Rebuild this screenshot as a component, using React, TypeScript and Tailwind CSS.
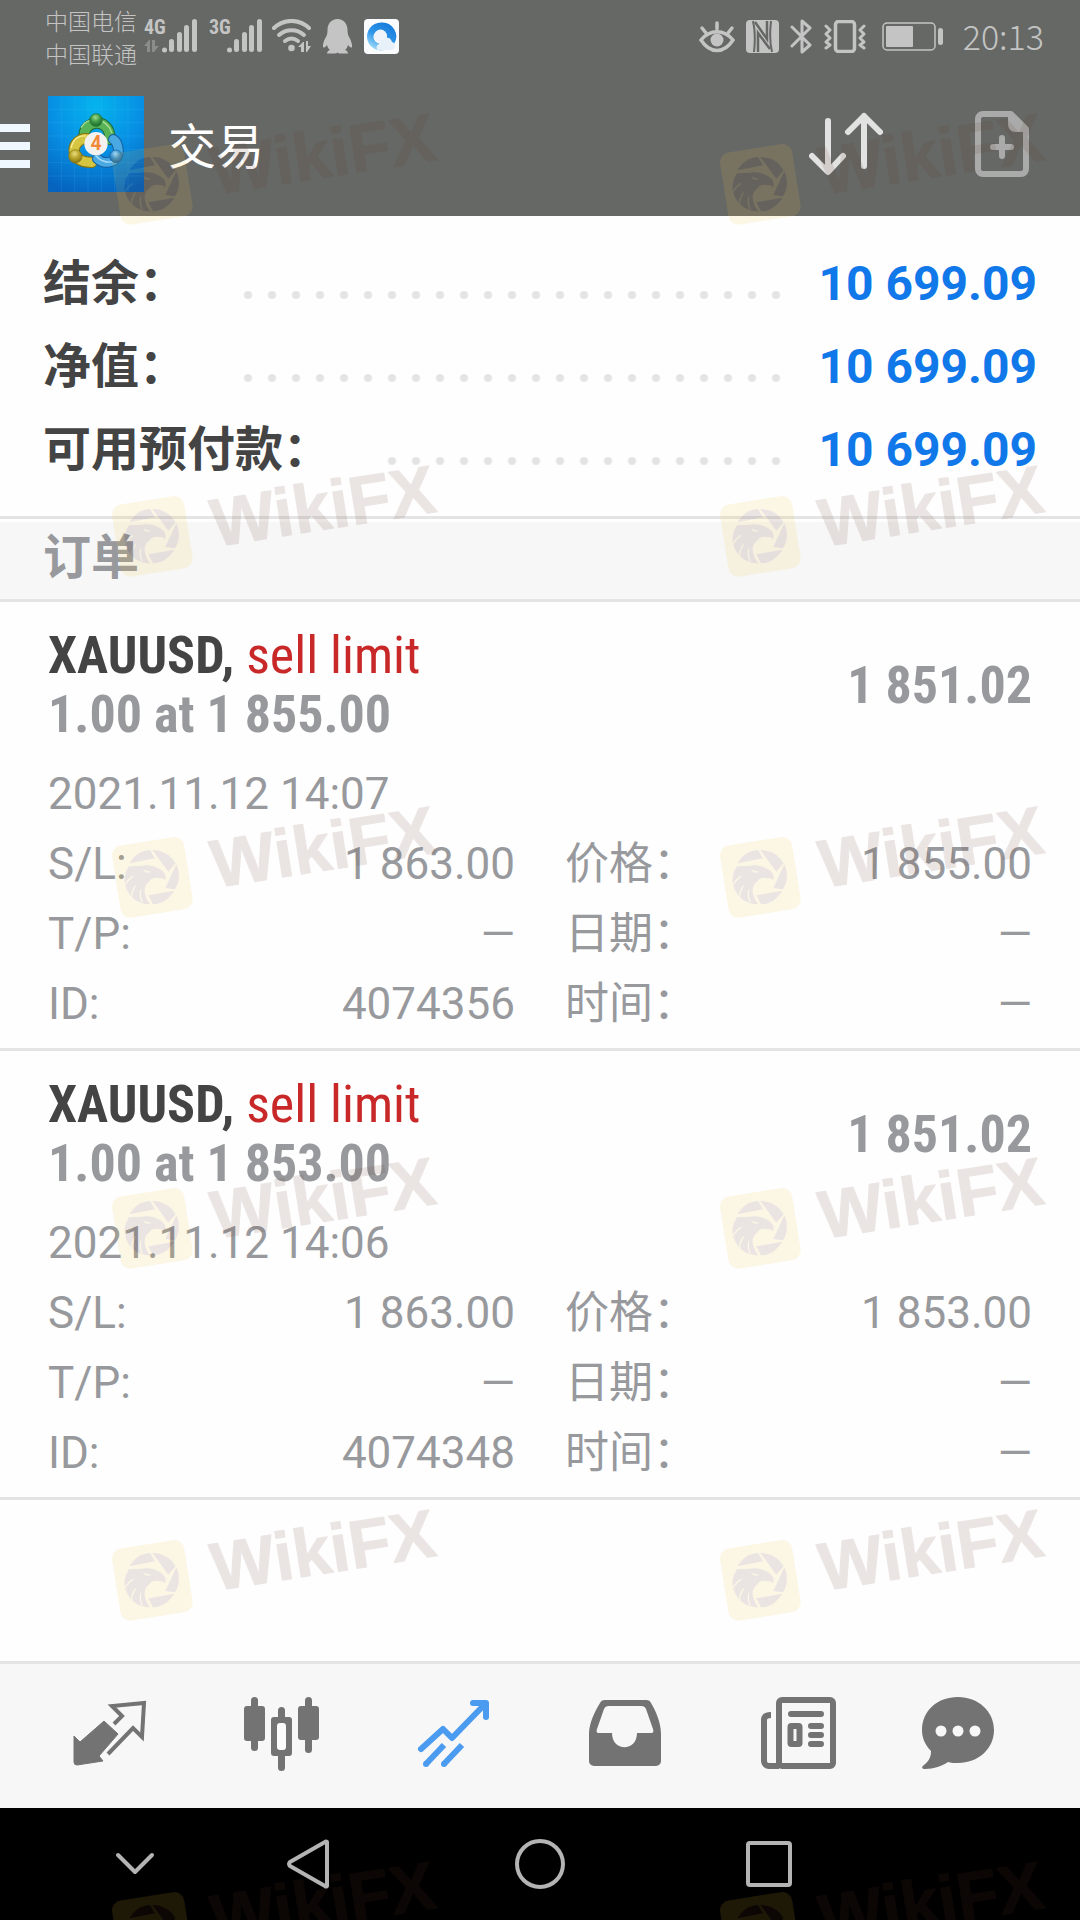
import React from "react";

const cjk = "font-['Roboto','Noto_Sans_CJK_SC',sans-serif]";
const condensed = "font-['Roboto_Condensed','Roboto','Noto_Sans_CJK_SC',sans-serif]";

/* ---------- status bar ---------- */

function Signal({ label, data }: { label: string; data?: boolean }) {
  return (
    <svg className="h-[35px] w-[53px] shrink-0 overflow-visible" viewBox="0 0 53 35" fill="#c3c4c3">
      <text x="0" y="15" fontSize="20" fontWeight="700" fontFamily="Roboto Condensed, Liberation Sans Narrow, Roboto, sans-serif">
        {label}
      </text>
      {data && (
        <g fill="#8b8c8b">
          <path d="M0 27l5-6h1v12H3v-6z" />
          <path d="M8 21h3v6h4l-5 6H8z" />
        </g>
      )}
      <circle cx="20.500" cy="31" r="2.500" />
      <rect x="25" y="20" width="5" height="13" rx="2.500" />
      <rect x="33" y="13" width="5" height="20" rx="2.500" />
      <rect x="40" y="6" width="5" height="27" rx="2.500" />
      <rect x="48" y="0" width="5" height="33" rx="2.500" />
    </svg>
  );
}

function WifiIcon() {
  return (
    <svg className="h-[35px] w-[39px] shrink-0" viewBox="0 0 39 35" fill="none" stroke="#c3c4c3" strokeWidth="4" strokeLinecap="round">
      <path d="M2 9C12-.5 27-.5 37 9" />
      <path d="M7 16c7-6.500 18-6.500 25 0" />
      <path d="M13 22c4-3 9-3 13 0" />
      <circle cx="19.500" cy="29" r="3.300" fill="#c3c4c3" stroke="none" />
      <g fill="#c3c4c3" stroke="none">
        <path d="M26 28l5-5h1v10h-3v-5z" />
        <path d="M34 22h2v5h3l-4 6h-1z" />
      </g>
    </svg>
  );
}

function PenguinIcon() {
  return (
    <svg className="h-[35px] w-[29px] shrink-0" viewBox="0 0 29 35" fill="#c3c4c3">
      <path d="M14.500 0C8 0 4.500 5 4.500 11c0 3-.5 5-1.500 7-2 3-3.500 8-3 10 1 1.500 3-.5 4-2 .5 2 1.500 4 3 5-2 .5-3 2-3 3.500h8c1 0 2-.5 2.500-1 .5.500 1.500 1 2.500 1h8c0-1.500-1-3-3-3.500 1.500-1 2.500-3 3-5 1 1.500 3 3.500 4 2 .5-2-1-7-3-10-1-2-1.500-4-1.500-7 0-6-3.500-11-10-11z" />
    </svg>
  );
}

function BrowserIcon() {
  return (
    <svg className="h-[35px] w-[35px] shrink-0" viewBox="0 0 35 35">
      <defs>
        <linearGradient id="ring" x1="0.800" y1="0" x2="0.200" y2="1">
          <stop offset="0" stopColor="#1478d8" />
          <stop offset="0.550" stopColor="#2f97ea" />
          <stop offset="1" stopColor="#aee3fb" />
        </linearGradient>
      </defs>
      <rect width="35" height="35" rx="4" fill="#fbfcfd" />
      <path d="M17 3.500a14 14 0 1 0 8 25.500l5-4a14 14 0 0 0-13-21.500zm-1 8a6.500 6.500 0 1 1 0 13 6.500 6.500 0 0 1 0-13z" fill="url(#ring)" />
      <circle cx="16.500" cy="17" r="6.500" fill="#eef4fa" />
      <path d="M14 31c-2-1-2-5 1-6 1-4 4-6 7-6 3-1 5 1 6 4 4 1 4 7 0 8z" fill="#e8f1fa" />
    </svg>
  );
}

function EyeIcon() {
  return (
    <svg className="h-[33px] w-[36px] shrink-0" viewBox="0 0 36 33" fill="none" stroke="#c3c4c3" strokeWidth="3.500" strokeLinecap="round">
      <path d="M2 20c9-11 23-11 32 0-9 14-23 14-32 0z" />
      <path d="M18 3v6M3 8l4 5M33 8l-4 5" />
      <circle cx="18" cy="20" r="6.500" fill="#c3c4c3" stroke="none" />
    </svg>
  );
}

function NfcIcon() {
  return (
    <svg className="h-[33px] w-[33px] shrink-0" viewBox="0 0 33 33">
      <rect width="33" height="33" rx="4" fill="#c3c4c3" />
      <path d="M7 1c2 8 2 22 1 31M26 32c-2-8-2-22-1-31" fill="none" stroke="#666866" strokeWidth="2" />
      <path d="M12 32V13l12 16M21 1v18L9 2" fill="none" stroke="#666866" strokeWidth="2.500" />
    </svg>
  );
}

function BluetoothIcon() {
  return (
    <svg className="h-[35px] w-[23px] shrink-0" viewBox="0 0 23 35" fill="none" stroke="#c3c4c3" strokeWidth="3" strokeLinecap="round" strokeLinejoin="round">
      <path d="M2 8l18 18-8 7V2l8 7L2 27" />
    </svg>
  );
}

function VibrateIcon() {
  return (
    <svg className="h-[33px] w-[42px] shrink-0" viewBox="0 0 42 33" fill="none" stroke="#c3c4c3" strokeWidth="3" strokeLinejoin="round" strokeLinecap="round">
      <rect x="11.500" y="1.500" width="19" height="30" rx="3" strokeWidth="3.500" />
      <path d="M2 6l4 4-4 4 4 4-4 4 4 3-4 3M40 6l-4 4 4 4-4 4 4 4-4 3 4 3" />
    </svg>
  );
}

function BatteryIcon() {
  return (
    <svg className="h-[29px] w-[61px] shrink-0" viewBox="0 0 61 29" fill="none">
      <rect x="1" y="1" width="52" height="27" rx="4" stroke="#c3c4c3" strokeWidth="1.500" />
      <rect x="4" y="4" width="27" height="21" rx="1" fill="#c3c4c3" />
      <rect x="56" y="6" width="5" height="17" rx="2.500" fill="#c3c4c3" />
    </svg>
  );
}

function StatusBar() {
  return (
    <div className="flex h-[72px] items-center justify-between pr-[36px] pl-[45px] text-[#c3c4c3]">
      <div className="flex items-center">
        <div className="mr-[7px] w-[92px] pt-[2px] font-['Noto_Sans_CJK_SC',sans-serif] text-[23px] leading-[33px] font-light whitespace-nowrap">
          <div>中国电信</div>
          <div>中国联通</div>
        </div>
        <div className="mr-3">
          <Signal label="4G" data />
        </div>
        <div className="mr-[10px]">
          <Signal label="3G" />
        </div>
        <div className="flex gap-3">
          <WifiIcon />
          <PenguinIcon />
          <BrowserIcon />
        </div>
      </div>
      <div className="flex items-center gap-[11px]">
        <EyeIcon />
        <NfcIcon />
        <BluetoothIcon />
        <VibrateIcon />
        <div className="ml-[5px]">
          <BatteryIcon />
        </div>
        <time className="w-[90px] text-right font-['Noto_Sans_CJK_SC',sans-serif] text-[34px] leading-[40px] font-light">20:13</time>
      </div>
    </div>
  );
}

/* ---------- title bar ---------- */

function AppLogo() {
  return (
    <svg className="size-24 shrink-0" viewBox="12 12 288 288">
      <defs>
        <radialGradient id="sky" cx="0.500" cy="0.100" r="0.950">
          <stop offset="0" stopColor="#04b4ee" />
          <stop offset="0.500" stopColor="#0790e4" />
          <stop offset="1" stopColor="#0563be" />
        </radialGradient>
        <radialGradient id="gHead" cx="0.450" cy="0.300" r="0.700">
          <stop offset="0" stopColor="#9fdc8c" />
          <stop offset="0.500" stopColor="#3f9a45" />
          <stop offset="1" stopColor="#1c6b2f" />
        </radialGradient>
        <radialGradient id="yHead" cx="0.450" cy="0.300" r="0.700">
          <stop offset="0" stopColor="#e9dd7c" />
          <stop offset="0.500" stopColor="#b8a42c" />
          <stop offset="1" stopColor="#857413" />
        </radialGradient>
        <radialGradient id="bHead" cx="0.450" cy="0.300" r="0.700">
          <stop offset="0" stopColor="#a4dcf8" />
          <stop offset="0.500" stopColor="#3d92cc" />
          <stop offset="1" stopColor="#175e9c" />
        </radialGradient>
      </defs>
      <rect x="12" y="12" width="288" height="288" fill="url(#sky)" />
      <path
        d="M52 12v288M92 12v288M132 12v288M172 12v288M212 12v288M252 12v288M12 52h288M12 92h288M12 132h288M12 172h288M12 212h288M12 252h288"
        stroke="#5cc4f4"
        strokeOpacity="0.220"
        strokeWidth="2"
      />
      <g fill="none" strokeLinecap="round">
        <path d="M122 136C110 88 198 68 198 142" stroke="#1d6a31" strokeWidth="34" />
        <path d="M122 136C110 88 198 68 198 142" stroke="#57b355" strokeWidth="28" />
        <path d="M112 106C126 74 188 74 203 122" stroke="#a5dd93" strokeWidth="4" />
        <path d="M128 140C84 138 66 212 144 211" stroke="#877410" strokeWidth="34" />
        <path d="M128 140C84 138 66 212 144 211" stroke="#d6c541" strokeWidth="28" />
        <path d="M82 166C88 138 108 130 124 132" stroke="#f5ec94" strokeWidth="4" />
        <path d="M160 200C180 222 232 212 222 166C219 152 212 144 208 142" stroke="#155f9f" strokeWidth="32" />
        <path d="M160 200C180 222 232 212 222 166C219 152 212 144 208 142" stroke="#4aa9e2" strokeWidth="26" />
        <path d="M156 192C176 214 204 214 216 204" stroke="#a9def8" strokeWidth="4" />
      </g>
      <circle cx="156" cy="84" r="19" fill="url(#gHead)" stroke="#1d6a31" strokeWidth="2" />
      <circle cx="94" cy="193" r="20" fill="url(#yHead)" stroke="#877410" strokeWidth="2" />
      <circle cx="216" cy="193" r="19" fill="url(#bHead)" stroke="#155f9f" strokeWidth="2" />
      <circle cx="156" cy="155" r="35" fill="#f4f2f0" />
      <text x="156" y="175" textAnchor="middle" fontSize="58" fontWeight="700" fill="#f28a3c" fontFamily="Roboto, sans-serif">
        4
      </text>
    </svg>
  );
}

function TitleBar() {
  return (
    <div className="flex h-36 items-center">
      <button aria-label="菜单" className="mr-[18px] flex w-[30px] flex-col gap-[10px] pt-1">
        <span className="h-2 bg-[#f0f8ff]" />
        <span className="h-2 bg-[#f0f8ff]" />
        <span className="h-2 bg-[#f0f8ff]" />
      </button>
      <AppLogo />
      <h1 className="ml-6 flex-1 pt-2 text-[48px] leading-[60px] font-normal text-white">交易</h1>
      <button aria-label="排序" className="mr-[92px]">
        <svg className="h-16 w-[74px]" viewBox="0 0 74 64" fill="none" stroke="#e2e2e2" strokeWidth="6" strokeLinecap="round" strokeLinejoin="round">
          <path d="M19 9v50M3 44l16 16 15-16M55 54V4M39 20L55 4l16 16" />
        </svg>
      </button>
      <button aria-label="新订单" className="mr-[51px]">
        <svg className="h-[66px] w-[54px]" viewBox="0 0 54 66" fill="none" stroke="#a9aaa9" strokeWidth="6">
          <path d="M8 3h28l15 15v40a5 5 0 0 1-5 5H8a5 5 0 0 1-5-5V8a5 5 0 0 1 5-5z" strokeLinejoin="round" />
          <path d="M33 3v9c0 6 3 9 8 9h10z" fill="#a9aaa9" stroke="none" />
          <path d="M36 6l12 12" />
          <path d="M27 27v18M18 36h18" strokeLinecap="round" />
        </svg>
      </button>
    </div>
  );
}

/* ---------- account summary ---------- */

const summary = [
  { label: "结余：", value: "10 699.09" },
  { label: "净值：", value: "10 699.09" },
  { label: "可用预付款：", value: "10 699.09" },
];

function Summary() {
  return (
    <dl className="pt-[26px] pr-[43px] pb-[25px] pl-[43px] text-[48px] leading-[83px] font-bold">
      {summary.map((row) => (
        <div key={row.label} className="flex">
          <dt className="text-[#444444]">{row.label}</dt>
          <div
            aria-hidden="true"
            className="mt-[49px] mr-[29px] ml-[49px] h-2 flex-1 bg-[radial-gradient(circle_at_12px_4px,#e3e3e3_3px,transparent_5px)] bg-[length:24px_8px] bg-repeat-x"
          />
          <dd className="text-[#1178ea]">{row.value}</dd>
        </div>
      ))}
    </dl>
  );
}

/* ---------- orders ---------- */

const orders = [
  { price: "1 855.00", date: "2021.11.12 14:07", sl: "1 863.00", id: "4074356" },
  { price: "1 853.00", date: "2021.11.12 14:06", sl: "1 863.00", id: "4074348" },
];

function Field({ label, value }: { label: string; value: string }) {
  return (
    <div className="flex justify-between">
      <dt>{label}</dt>
      <dd>{value}</dd>
    </div>
  );
}

function Order({ price, date, sl, id }: (typeof orders)[number]) {
  return (
    <article className="border-b-[3px] border-[#e4e4e4] px-12 pt-[24px] pb-[9px] text-[#98999d]">
      <div className={`flex items-center justify-between text-[52px] leading-[59px] font-bold ${condensed}`}>
        <div>
          <h3>
            <span className="text-[#444444]">XAUUSD, </span>
            <span className="font-normal text-[#c92828]">sell limit</span>
          </h3>
          <p>1.00 at {price}</p>
        </div>
        <p>1 851.02</p>
      </div>
      <div className="mt-[15px] text-[44px] leading-[70px]">
        <p>{date}</p>
        <dl className="grid grid-cols-2 gap-x-[50px]">
          <Field label="S/L:" value={sl} />
          <Field label="价格：" value={price} />
          <Field label="T/P:" value="—" />
          <Field label="日期：" value="—" />
          <Field label="ID:" value={id} />
          <Field label="时间：" value="—" />
        </dl>
      </div>
    </article>
  );
}

/* ---------- bottom navigation ---------- */

function TabBar() {
  return (
    <nav className="grid h-[147px] grid-cols-[172fr_172fr_172fr_172fr_172fr_148fr] items-center border-t-[3px] border-[#e4e4e4] bg-[#f7f7f7] pr-12 pb-1 pl-6 text-[#737373]">
      <button aria-label="行情" className="flex justify-center">
        <svg className="h-[76px] w-[76px]" viewBox="0 0 76 76" fill="currentColor">
          <path d="M32 25l14 13-19 22 4 5-26 4q-3 0-3-3V40l6 6z" strokeLinejoin="round" stroke="currentColor" strokeWidth="1" />
          <path d="M42 28l8-8-10-10 32-3-2 34-9-9-25 26" fill="none" stroke="currentColor" strokeWidth="4" />
        </svg>
      </button>
      <button aria-label="图表" className="flex justify-center">
        <svg className="h-[76px] w-[76px]" viewBox="0 0 76 76" fill="currentColor">
          <rect x="0" y="10" width="21" height="35" rx="3" />
          <rect x="7" y="1" width="7" height="54" rx="3.500" />
          <rect x="54" y="10" width="21" height="34" rx="3" />
          <rect x="61" y="1" width="7" height="56" rx="3.500" />
          <rect x="34" y="11" width="7" height="64" rx="3.500" />
          <rect x="27" y="21" width="21" height="39" rx="3" />
          <rect x="33" y="27" width="9" height="27" rx="3" fill="#fbfbfb" />
        </svg>
      </button>
      <button aria-label="交易" className="flex justify-center text-[#4b9bf0]">
        <svg className="h-[76px] w-[76px]" viewBox="0 0 76 76" fill="none" stroke="currentColor" strokeWidth="6">
          <path d="M5 53l22-20 9 9L69 8M57 7h13v14" strokeLinecap="round" strokeLinejoin="round" />
          <path d="M10 68l18-19M28 68l18-19" />
          <g fill="currentColor" stroke="none">
            <circle cx="10" cy="68" r="3" />
            <circle cx="28" cy="68" r="3" />
          </g>
        </svg>
      </button>
      <button aria-label="历史" className="flex justify-center">
        <svg className="h-[76px] w-[76px]" viewBox="0 0 76 76" fill="currentColor">
          <path
            fillRule="evenodd"
            d="M17 4h41c3 0 4 1 5 3 5 8 10 20 10 31v27a5 5 0 0 1-5 5H6a5 5 0 0 1-5-5V38C1 27 7 15 12 7c1-2 2-3 5-3zM21 10c-3 0-4 1-5 3L9 33c-1 3 0 4 2 4h13c0 19 25 19 25 0h14c2 0 3-1 2-4l-7-20c-1-2-2-3-5-3z"
          />
        </svg>
      </button>
      <button aria-label="新闻" className="flex justify-center">
        <svg className="h-[76px] w-[76px]" viewBox="0 0 76 76" fill="none" stroke="currentColor" strokeWidth="6">
          <rect x="19" y="4" width="54" height="66" rx="3" />
          <path d="M19 70H9a5 5 0 0 1-5-5V24c0-3 2-5 7-5" />
          <path d="M31 18h30M51 30h10M51 39h10M51 48h10" strokeLinecap="round" />
          <rect x="30.500" y="30" width="9" height="18" rx="1" />
        </svg>
      </button>
      <button aria-label="消息" className="flex justify-center">
        <svg className="h-[76px] w-[76px]" viewBox="0 0 76 76" fill="currentColor">
          <path d="M38 1C17 1 2 15 2 34c0 8 3 15 9 21 0 6-2 10-7 14-3 2-2 4 1 4 9 0 17-3 23-7 3 1 6 1 10 1 20 0 36-14 36-33S58 1 38 1z" />
          <g fill="#f7f7f7">
            <circle cx="21" cy="35" r="5.500" />
            <circle cx="38" cy="35" r="5.500" />
            <circle cx="55" cy="35" r="5.500" />
          </g>
        </svg>
      </button>
    </nav>
  );
}

function SystemBar() {
  return (
    <div className="grid h-28 grid-cols-[222fr_124fr_340fr_118fr_228fr] items-center bg-black px-6 text-[#b4b4b4]">
      <button aria-label="收起" className="flex justify-center">
        <svg className="h-[50px] w-[50px]" viewBox="0 0 50 50" fill="none" stroke="currentColor" strokeWidth="4" strokeLinecap="round" strokeLinejoin="round">
          <path d="M8 16l17 17 17-17" />
        </svg>
      </button>
      <button aria-label="返回" className="flex justify-center">
        <svg className="h-[50px] w-[50px]" viewBox="0 0 50 50" fill="none" stroke="currentColor" strokeWidth="4" strokeLinejoin="round">
          <path d="M44 3v44q-1 1-2 0L7 27q-2-2 0-4L42 3q1-1 2 0z" />
        </svg>
      </button>
      <button aria-label="主页" className="flex justify-center">
        <svg className="h-[50px] w-[50px]" viewBox="0 0 50 50" fill="none" stroke="currentColor" strokeWidth="4">
          <circle cx="25" cy="25" r="23" />
        </svg>
      </button>
      <button aria-label="最近任务" className="flex justify-center">
        <svg className="h-[50px] w-[50px]" viewBox="0 0 50 50" fill="none" stroke="currentColor" strokeWidth="4">
          <rect x="4" y="4" width="42" height="42" rx="2" />
        </svg>
      </button>
    </div>
  );
}

/* ---------- watermark ---------- */

function WatermarkMark() {
  return (
    <svg className="h-[136px] w-[340px] shrink-0 opacity-[0.12]" viewBox="0 0 340 136">
      <g transform="translate(0 35) scale(0.3333)">
        <rect x="32.500" y="29.500" width="219" height="219" rx="30" fill="#f0c43a" transform="rotate(-9 142 139)" />
        <g fill="#643a2a">
          <path d="M74 97C86 74 108 58 135 57l15 25z" />
          <path d="M142 57c30 0 54 14 70 40l-22 25z" />
          <path d="M214 100c12 26 10 54-4 75l-29-4z" />
          <path d="M130 193l78-14c-16 26-38 40-64 41z" />
          <path d="M72 106l40-2c22-4 34 2 44 6 14 5 24 14 26 26 0 6-1 9-3 12-3-6-10-8-18-7-22 2-40 14-42 34-1 16 6 32 17 45-40 0-70-26-77-64-2-18 3-36 13-50z" />
        </g>
        <g fill="none" stroke="#f0c43a" strokeWidth="4">
          <path d="M92 164c-8 10-12 22-12 34M108 176c-4 12-2 26 4 38M84 136c-10 6-18 14-24 24" />
          <path d="M117 118c6 6 12 6 19 4" />
          <path d="M136 149c8-6 18-8 26-5" />
        </g>
      </g>
      <text
        x="110"
        y="92"
        transform="rotate(-9 110 92)"
        fontSize="68"
        fontWeight="700"
        fontFamily="Liberation Sans, sans-serif"
        fill="#643a2a"
        stroke="#643a2a"
        strokeWidth="1"
        strokeLinejoin="round"
      >
        WikiFX
      </text>
    </svg>
  );
}

const watermarkRows = ["top-[103px]", "top-[455px]", "top-[796px]", "top-[1147px]", "top-[1499px]", "top-[1851px]"];

function Watermark() {
  return (
    <div aria-hidden="true" className="pointer-events-none absolute inset-0 overflow-hidden">
      {watermarkRows.map((top) => (
        <div key={top} className={`absolute left-[105px] flex gap-[268px] ${top}`}>
          <WatermarkMark />
          <WatermarkMark />
        </div>
      ))}
    </div>
  );
}

export default function App() {
  return (
    <div className={`relative flex min-h-screen flex-col overflow-hidden bg-[#fefefe] ${cjk}`}>
      <header className="bg-[#666866]">
        <StatusBar />
        <TitleBar />
      </header>
      <main className="flex-1">
        <Summary />
        <section>
          <div className="border-t-[3px] border-b-[3px] border-[#e4e4e4] pt-[3px]">
            <h2 className="bg-[#f7f7f7] pt-[3px] pb-2 pl-[43px] text-[48px] leading-[66px] font-bold text-[#98999d]">订单</h2>
          </div>
          {orders.map((order) => (
            <Order key={order.id} {...order} />
          ))}
        </section>
      </main>
      <TabBar />
      <SystemBar />
      <Watermark />
    </div>
  );
}
